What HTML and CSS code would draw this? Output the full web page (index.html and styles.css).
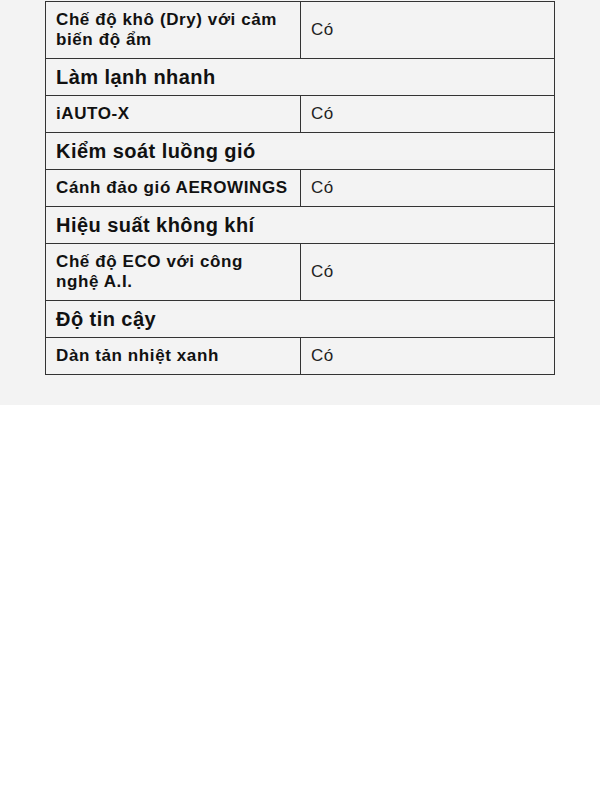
FILE: index.html
```html
<!DOCTYPE html>
<html lang="vi">
<head>
<meta charset="utf-8">
<link rel="stylesheet" href="styles.css">
</head>
<body>
<section class="panel">
  <table class="specs">
    <tr><th class="label">Chế độ khô (Dry) với cảm biến độ ẩm</th><td class="value">Có</td></tr>
    <tr><th class="group" colspan="2">Làm lạnh nhanh</th></tr>
    <tr><th class="label">iAUTO-X</th><td class="value">Có</td></tr>
    <tr><th class="group" colspan="2">Kiểm soát luồng gió</th></tr>
    <tr><th class="label">Cánh đảo gió AEROWINGS</th><td class="value">Có</td></tr>
    <tr><th class="group" colspan="2">Hiệu suất không khí</th></tr>
    <tr><th class="label">Chế độ ECO với công nghệ A.I.</th><td class="value">Có</td></tr>
    <tr><th class="group" colspan="2">Độ tin cậy</th></tr>
    <tr><th class="label">Dàn tản nhiệt xanh</th><td class="value">Có</td></tr>
  </table>
</section>
</body>
</html>
```

FILE: styles.css
```css
html, body {
  margin: 0;
  padding: 0;
  background: #ffffff;
  font-family: "Liberation Sans", Arial, sans-serif;
}
.panel {
  background: #f3f3f3;
  padding: 1px 45px 30px 45px;
}
.specs {
  width: 510px;
  border-collapse: collapse;
  table-layout: fixed;
}
.specs .label,
.specs .value,
.specs .group {
  border: 1px solid #333;
  text-align: left;
  vertical-align: middle;
  padding: 8px 10px;
}
.specs .label {
  width: 234px;
  font-size: 17px;
  letter-spacing: 0.6px;
  line-height: 20px;
  font-weight: bold;
  color: #111;
}
.specs .value {
  font-size: 17px;
  letter-spacing: 0.5px;
  line-height: 20px;
  font-weight: normal;
  color: #222;
}
.specs .group {
  font-size: 20px;
  letter-spacing: 0.45px;
  line-height: 24px;
  font-weight: bold;
  color: #111;
  padding: 6px 10px;
}
```
